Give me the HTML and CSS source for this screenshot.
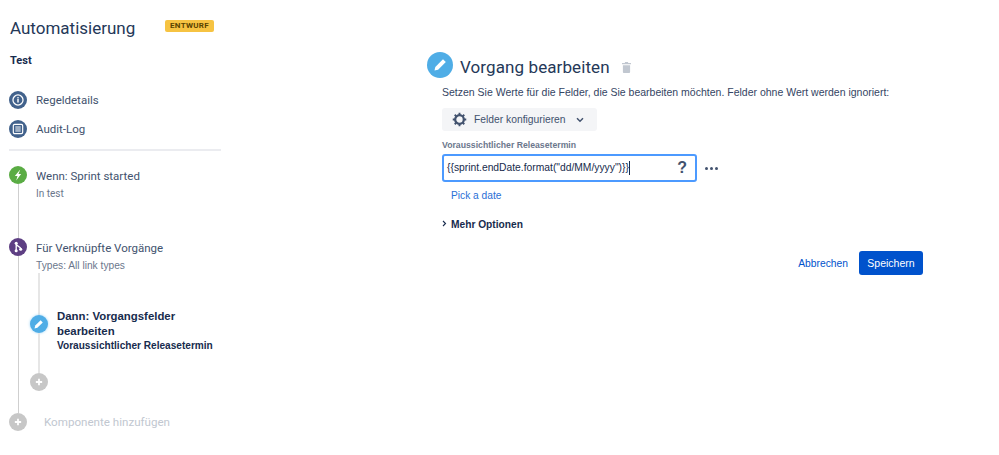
FILE: index.html
```html
<!DOCTYPE html>
<html lang="en">
<head>
  <meta charset="UTF-8">
  <title>Automatisierung</title>
  <link rel="stylesheet" href="styles.css">
</head>
<body>
  <div class="page">
    <!-- Sidebar -->
    <aside class="sidebar">
      <div class="title-row">
        <h1>Automatisierung</h1>
        <span class="lozenge">ENTWURF</span>
      </div>
      <div class="rule-name">Test</div>

      <ul class="side-nav">
        <li>
          <span class="icon icon-navy">
            <svg viewBox="0 0 20 20" width="18" height="18"><circle cx="10" cy="10" r="5.6" fill="none" stroke="#fff" stroke-width="1.4"/><rect x="9.2" y="8.8" width="1.6" height="4" fill="#fff"/><rect x="9.2" y="6.8" width="1.6" height="1.4" fill="#fff"/></svg>
          </span>
          Regeldetails
        </li>
        <li>
          <span class="icon icon-navy">
            <svg viewBox="0 0 20 20" width="18" height="18"><rect x="4.8" y="4.8" width="10.4" height="10.4" rx="1.5" fill="none" stroke="#fff" stroke-width="1.3"/><path d="M7 7.8h6M7 10h6M7 12.2h6" stroke="#fff" stroke-width="1.1"/></svg>
          </span>
          Audit-Log
        </li>
      </ul>

      <!-- Rule steps -->
      <div class="steps">
        <div class="step step-trigger">
          <div class="rail">
            <span class="icon icon-green">
              <svg viewBox="0 0 20 20" width="18" height="18"><path d="M12.500 4 6.500 11h3l-1.500 5 5.500-7h-3z" fill="#fff"/></svg>
            </span>
            <span class="line"></span>
          </div>
          <div class="step-text">
            <div class="step-name">Wenn: Sprint started</div>
            <div class="step-sub">In test</div>
          </div>
        </div>

        <div class="step step-branch">
          <div class="rail">
            <span class="icon icon-purple">
              <svg viewBox="0 0 20 20" width="18" height="18"><path d="M8 6v8M8 6.500c0 3 5 2.500 5 5.500" fill="none" stroke="#fff" stroke-width="1.500"/><circle cx="8" cy="5.800" r="1.700" fill="#fff"/><circle cx="8" cy="14.200" r="1.700" fill="#fff"/><circle cx="13" cy="12.500" r="1.700" fill="#fff"/></svg>
            </span>
            <span class="line"></span>
          </div>
          <div class="step-text">
            <div class="step-name">Für Verknüpfte Vorgänge</div>
            <div class="step-sub step-sub-arial">Types: All link types</div>

            <div class="branch">
              <div class="branch-item">
                <div class="rail rail-first">
                  <span class="line line-top"></span>
                  <span class="icon icon-blue icon-selected">
                    <svg viewBox="0 0 20 20" width="18" height="18"><path d="m5 15 .8-3.200 6-6 2.400 2.400-6 6z" fill="#fff"/></svg>
                  </span>
                  <span class="line"></span>
                </div>
                <div class="action">
                  <div class="action-name">Dann: Vorgangsfelder bearbeiten</div>
                  <div class="action-sub">Voraussichtlicher Releasetermin</div>
                </div>
              </div>
              <span class="icon icon-grey">
                <svg viewBox="0 0 20 20" width="18" height="18"><path d="M10 6.500v7M6.500 10h7" stroke="#fff" stroke-width="2"/></svg>
              </span>
            </div>
          </div>
        </div>

        <div class="step step-add">
          <span class="icon icon-grey">
            <svg viewBox="0 0 20 20" width="18" height="18"><path d="M10 6.500v7M6.500 10h7" stroke="#fff" stroke-width="2"/></svg>
          </span>
          <span class="add-text">Komponente hinzufügen</span>
        </div>
      </div>
    </aside>

    <!-- Edit panel -->
    <section class="panel">
      <div class="panel-head">
        <span class="panel-icon">
          <svg viewBox="0 0 26 26" width="26" height="26"><path d="m7.500 18.500.8-3.600 7.700-7.700 2.800 2.800-7.700 7.700z" fill="#fff"/></svg>
        </span>
        <h2>Vorgang bearbeiten</h2>
        <svg class="trash" viewBox="0 0 10 12" width="9" height="11"><path d="M3.500 0h3l.5 1h3v1.500H0V1h3zM1 3.500h8V11a1 1 0 0 1-1 1H2a1 1 0 0 1-1-1z" fill="#c1c7d0"/></svg>
      </div>

      <div class="panel-body">
        <p class="hint">Setzen Sie Werte für die Felder, die Sie bearbeiten möchten. Felder ohne Wert werden ignoriert:</p>

        <button class="config-btn" type="button">
          <svg viewBox="0 0 16 16" width="15" height="15"><circle cx="8" cy="8" r="4.600" fill="none" stroke="#42526e" stroke-width="2.400"/><path d="M8 .8v2.400M8 12.800v2.400M.8 8h2.400M12.800 8h2.400M2.900 2.900l1.700 1.700M11.400 11.400l1.700 1.700M13.100 2.900l-1.700 1.700M4.600 11.400l-1.700 1.700" stroke="#42526e" stroke-width="2"/></svg>
          <span>Felder konfigurieren</span>
          <svg class="chevron" viewBox="0 0 8 6" width="8" height="6"><path d="m1 1.200 3 3 3-3" fill="none" stroke="#42526e" stroke-width="1.500"/></svg>
        </button>

        <label class="field-label">Voraussichtlicher Releasetermin</label>
        <div class="field-row">
          <div class="field">
            <span class="field-value">{{sprint.endDate.format("dd/MM/yyyy")}}</span>
            <span class="field-help">?</span>
          </div>
          <div class="dots"><i></i><i></i><i></i></div>
        </div>
        <a class="pick-date" href="#">Pick a date</a>

        <div class="more">
          <svg viewBox="0 0 5 7" width="5" height="7"><path d="m1 1 2.500 2.500L1 6" fill="none" stroke="#172b4d" stroke-width="1.100"/></svg>
          <span>Mehr Optionen</span>
        </div>

        <div class="actions">
          <a class="cancel" href="#">Abbrechen</a>
          <button class="save" type="button">Speichern</button>
        </div>
      </div>
    </section>
  </div>
</body>
</html>
```

FILE: styles.css
```css
* {
  margin: 0;
  padding: 0;
  box-sizing: border-box;
}

body {
  background-color: #fff;
  color: #172b4d;
  font-family: "Liberation Sans", Arial, sans-serif;
  height: 455px;
  overflow: hidden;
}

a {
  text-decoration: none;
  color: #0052cc;
}

ul {
  list-style-type: none;
}

.page {
  display: flex;
  align-items: flex-start;
}

/* Sidebar */
.sidebar {
  width: 427px;
  flex-shrink: 0;
  padding: 16px 0 0 9px;
  font-family: Roboto, sans-serif;
}

.title-row {
  display: flex;
  align-items: center;
  height: 24px;
}

.title-row h1 {
  font-size: 17px;
  font-weight: 400;
  color: #253858;
  width: 156px;
  padding-left: 1px;
}

.lozenge {
  background-color: #f6c342;
  color: #594300;
  font-size: 8px;
  font-weight: 700;
  letter-spacing: 0.3px;
  line-height: 12px;
  padding: 0 5px;
  border-radius: 2px;
  margin-top: -4px;
}

.rule-name {
  font-size: 11px;
  font-weight: 700;
  margin: 14px 0 0 1px;
  line-height: 14px;
}

.side-nav {
  width: 212px;
  margin-top: 22px;
  padding-bottom: 10px;
  border-bottom: 2px solid #ebecf0;
}

.side-nav li {
  display: flex;
  align-items: center;
  gap: 9px;
  height: 20px;
  margin-bottom: 8.500px;
  font-size: 11.500px;
  color: #42526e;
}

.side-nav li:last-child {
  margin-bottom: 0;
}

.icon {
  display: block;
  width: 18px;
  height: 18px;
  border-radius: 50%;
  flex-shrink: 0;
  overflow: hidden;
}

.icon svg {
  display: block;
}

.icon-navy { background-color: #42628c; }
.icon-green { background-color: #5aac44; }
.icon-purple { background-color: #5e3f83; }
.icon-blue { background-color: #4fade6; }
.icon-grey { background-color: #c7c7c7; }

.icon-selected {
  box-shadow: 0 0 3px #9fd4f5;
}

/* Steps */
.steps {
  margin-top: 15px;
}

.step {
  display: flex;
  gap: 9px;
}

.rail {
  display: flex;
  flex-direction: column;
  align-items: center;
  width: 18px;
  flex-shrink: 0;
}

.line {
  display: block;
  width: 1px;
  flex: 1;
  background-color: #cfcfcf;
}

.step-trigger {
  height: 72px;
}

.step-name {
  font-size: 11.500px;
  color: #42526e;
  line-height: 20px;
}

.step-sub {
  font-size: 10px;
  color: #6b778c;
  line-height: 14px;
  margin-top: 1px;
}

.step-sub-arial {
  font-family: "Liberation Sans", Arial, sans-serif;
  font-size: 10.200px;
}

.branch {
  margin-left: -6px;
  padding-bottom: 22px;
}

.branch-item {
  display: flex;
  gap: 9px;
  height: 100px;
}

.rail-first .line {
  width: 2px;
  background-color: #e6e6e6;
}

.rail-first .line-top {
  flex: none;
  height: 42px;
}

.action {
  margin-top: 36px;
  width: 170px;
  font-family: "Liberation Sans", Arial, sans-serif;
  font-weight: 700;
  color: #172b4d;
}

.action-name {
  font-size: 11.400px;
  line-height: 15px;
}

.action-sub {
  font-size: 10.100px;
  line-height: 14px;
  white-space: nowrap;
}

.step-add {
  align-items: center;
  gap: 17px;
}

.add-text {
  font-size: 11.600px;
  color: #c1c7d0;
}

/* Edit panel */
.panel {
  flex: 1;
  padding-top: 51px;
}

.panel-head {
  display: flex;
  align-items: center;
  height: 28px;
}

.panel-icon {
  display: block;
  width: 26px;
  height: 26px;
  background-color: #4fade6;
  border-radius: 50%;
  margin-right: 7px;
}

.panel-icon svg {
  display: block;
}

.panel-head h2 {
  font-family: Roboto, sans-serif;
  font-size: 17px;
  font-weight: 400;
  letter-spacing: 0.1px;
  color: #253858;
  padding-top: 3px;
}

.trash {
  margin: 4px 0 0 12px;
}

.panel-body {
  width: 496px;
  padding-left: 15px;
}

.hint {
  font-size: 10.500px;
  line-height: 14px;
  color: #344563;
  white-space: nowrap;
  margin-top: 6px;
}

.config-btn {
  display: flex;
  align-items: center;
  width: 155px;
  height: 23px;
  margin-top: 9px;
  padding-left: 10px;
  background-color: #f4f5f7;
  border: none;
  border-radius: 3px;
  color: #42526e;
  font-family: "Liberation Sans", Arial, sans-serif;
  font-size: 10.300px;
}

.config-btn span {
  margin-left: 7px;
}

.chevron {
  margin-left: 10px;
}

.field-label {
  display: block;
  font-size: 8.700px;
  font-weight: 700;
  color: #6b778c;
  line-height: 11px;
  margin-top: 9px;
}

.field-row {
  display: flex;
  align-items: center;
  margin-top: 3px;
}

.field {
  display: flex;
  align-items: center;
  justify-content: space-between;
  width: 255px;
  height: 28px;
  border: 2px solid #4c9aff;
  border-radius: 3px;
  padding: 0 8px 0 3px;
}

.field-value {
  font-size: 10.300px;
  color: #172b4d;
  border-right: 1px solid #172b4d;
  line-height: 14px;
}

.field-help {
  font-size: 16px;
  font-weight: 700;
  color: #42526e;
}

.dots {
  display: flex;
  gap: 2px;
  margin-left: 8px;
}

.dots i {
  display: block;
  width: 3px;
  height: 3px;
  border-radius: 50%;
  background-color: #42526e;
}

.pick-date {
  display: block;
  font-size: 10.200px;
  line-height: 14px;
  color: #2a6fd6;
  margin: 7px 0 0 9px;
}

.more {
  display: flex;
  align-items: center;
  gap: 4px;
  font-size: 10.200px;
  font-weight: 700;
  color: #172b4d;
  line-height: 14px;
  margin-top: 15px;
}

.more svg {
  margin-top: -4px;
}

.actions {
  display: flex;
  justify-content: flex-end;
  align-items: center;
  gap: 11px;
  margin-top: 19px;
}

.cancel {
  font-size: 10.300px;
}

.save {
  width: 64px;
  height: 24px;
  background-color: #0052cc;
  color: #fff;
  border: none;
  border-radius: 3px;
  font-family: "Liberation Sans", Arial, sans-serif;
  font-size: 10.500px;
}
```
